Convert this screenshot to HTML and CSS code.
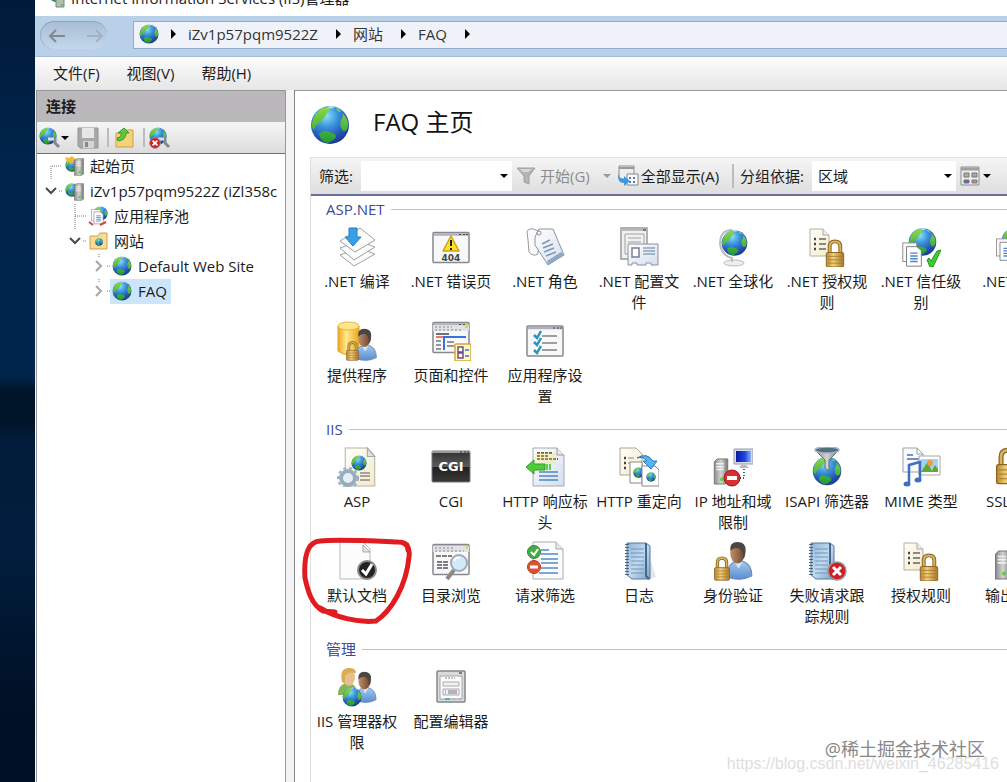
FILE: index.html
```html
<!doctype html>
<html lang="zh-CN">
<head>
    <meta charset="utf-8">
    <title>Internet Information Services (IIS)管理器</title>
    <link rel="stylesheet" href="styles.css">
</head>
<body>
    <svg class="defs" aria-hidden="true">
        <defs>
            <radialGradient id="g-sea" cx="0.4" cy="0.25" r="0.75">
                <stop offset="0" stop-color="#8fe0f8"/><stop offset="0.4" stop-color="#3a94dc"/>
                <stop offset="0.8" stop-color="#2350b4"/><stop offset="1" stop-color="#1c3c90"/>
            </radialGradient>
            <linearGradient id="g-land" x2="0" y2="1"><stop offset="0" stop-color="#8ad84a"/><stop offset="1" stop-color="#209a30"/></linearGradient>
            <linearGradient id="g-gold" x2="1" y2="0"><stop offset="0" stop-color="#b98630"/><stop offset="0.4" stop-color="#f0d078"/><stop offset="1" stop-color="#a8762a"/></linearGradient>
            <linearGradient id="g-yellow" x2="1" y2="0"><stop offset="0" stop-color="#f0a818"/><stop offset="0.4" stop-color="#ffe890"/><stop offset="1" stop-color="#eca818"/></linearGradient>
            <linearGradient id="g-paper" x2="1" y2="1"><stop offset="0" stop-color="#ffffff"/><stop offset="1" stop-color="#d4deec"/></linearGradient>
            <linearGradient id="g-cream" x2="1" y2="1"><stop offset="0" stop-color="#fffefa"/><stop offset="1" stop-color="#f4ebc8"/></linearGradient>
            <linearGradient id="g-metal" x2="1" y2="0"><stop offset="0" stop-color="#8b8b8b"/><stop offset="0.5" stop-color="#d4d4d4"/><stop offset="1" stop-color="#777777"/></linearGradient>
            <linearGradient id="g-shirt" x2="0" y2="1"><stop offset="0" stop-color="#a8ccf0"/><stop offset="1" stop-color="#5a8ccc"/></linearGradient>
            <linearGradient id="g-skin" x2="1" y2="0"><stop offset="0" stop-color="#c09068"/><stop offset="1" stop-color="#6c4430"/></linearGradient>
            <linearGradient id="g-book" x2="1" y2="1"><stop offset="0" stop-color="#8fb4d8"/><stop offset="0.5" stop-color="#c2dbf0"/><stop offset="1" stop-color="#7ea4c8"/></linearGradient>
            <linearGradient id="g-black" x2="0" y2="1"><stop offset="0" stop-color="#303030"/><stop offset="0.5" stop-color="#5a5a5a"/><stop offset="0.52" stop-color="#202020"/><stop offset="1" stop-color="#383838"/></linearGradient>
            <linearGradient id="g-screen" x2="1" y2="0"><stop offset="0" stop-color="#0818a8"/><stop offset="0.6" stop-color="#2048e0"/><stop offset="1" stop-color="#90b0f8"/></linearGradient>
        </defs>

        <symbol id="globe" viewBox="0 0 40 40">
            <circle cx="20" cy="20" r="19" fill="url(#g-sea)"/>
            <path fill="url(#g-land)" d="M2 18Q4 7 13 3Q20 1 20 6Q16 8 15 12Q12 14 10 18Q6 19 4 25Q1 22 2 18ZM32 8Q39 14 38 21Q37 27 33 26Q29 21 31 15Q34 12 32 8ZM9 29Q13 24 19 27Q26 28 26 32Q22 37 17 38Q10 36 9 29ZM26 3Q30 4 31 7Q27 7 26 3Z"/>
            <path fill="#ffffff" opacity="0.6" d="M17 2Q21 0 25 2Q21 5 17 2Z"/>
        </symbol>
        <symbol id="lock" viewBox="0 0 20 30">
            <path d="M4.500 16V8Q4.500 2.500 10 2.500T15.500 8V16" fill="none" stroke="#8c6422" stroke-width="4"/>
            <path d="M4.500 16V8Q4.500 2.500 10 2.500T15.500 8V16" fill="none" stroke="#d8b45c" stroke-width="2"/>
            <rect x="1" y="14" width="18" height="15" rx="1.500" fill="url(#g-gold)" stroke="#8c6422"/>
            <path d="M3 18H17M3 21.500H17M3 25H17" stroke="#9c6e24" opacity="0.7"/>
        </symbol>
        <symbol id="person" viewBox="0 0 26 38">
            <path d="M1 35Q1 20 13 19Q25 21 25 34Q14 40 1 35Z" fill="url(#g-shirt)" stroke="#5f88bb"/>
            <path d="M8 20L12 27L16 20Z" fill="#d8e8f8"/>
            <ellipse cx="11" cy="12" rx="7" ry="10" fill="url(#g-skin)"/>
            <path d="M4 10Q3 1 11 1Q19 1 19 9Q19 14 17 18Q16 8 12 7Q7 6 4 10Z" fill="#4a4644"/>
        </symbol>
        <symbol id="page" viewBox="0 0 30 38">
            <path d="M1 1H22L29 9V37H1Z" fill="url(#g-cream)" stroke="#b4b4ac"/>
            <path d="M22 1V9H29Z" fill="#e0e0e0" stroke="#a8a8a8"/>
        </symbol>
        <symbol id="server" viewBox="0 0 16 28">
            <path d="M1 4L4 1H15V25L12 27H1Z" fill="url(#g-metal)" stroke="#787878"/>
            <path d="M3 6H11M3 9H11M3 12H11" stroke="#f0f0f0" stroke-width="1.500"/>
            <circle cx="9" cy="22" r="2" fill="#58d838"/>
        </symbol>
        <symbol id="frame" viewBox="0 0 38 32">
            <rect x="1" y="1" width="36" height="30" rx="1" fill="#f8f8f9" stroke="#85888e" stroke-width="1.500"/>
            <path d="M2 3H36" stroke="#adb2ba" stroke-width="2.500"/>
            <path d="M27 3H29M31 3H33M34 3H36" stroke="#46484c"/>
        </symbol>
        <symbol id="rules" viewBox="0 0 40 40">
            <path d="M3 2H16L22 8V29H3Z" fill="url(#g-cream)" stroke="#b4b09c"/>
            <path d="M16 2V8H22" fill="#eeeeee" stroke="#aaaaaa"/>
            <path d="M7 12H9M7 17H9M7 22H9" stroke="#444444" stroke-width="2.500"/>
            <path d="M12 12H19M12 17H19M12 22H19" stroke="#666666" stroke-width="1.500"/>
            <use href="#lock" x="18" y="12" width="20" height="29"/>
        </symbol>
        <symbol id="notebook" viewBox="0 0 40 40">
            <path d="M32 20L37 36L31 38H12Z" fill="#e6e6e6"/>
            <path d="M8 2H27L31 5V38H13L8 34Z" fill="url(#g-book)" stroke="#54799c"/>
            <path d="M27 2V35L30 38" fill="none" stroke="#44688c" stroke-width="2"/>
            <path d="M12 8H25M12 12H25M12 16H25M12 20H25M12 24H25M12 28H25M12 32H25" stroke="#6f96ba"/>
            <path d="M8 3V35" stroke="#4c6680" stroke-width="4" stroke-dasharray="1 2"/>
        </symbol>
        <symbol id="pages" viewBox="0 0 24 28">
            <rect x="1" y="1" width="15" height="20" fill="#fafafa" stroke="#8c8c8c"/>
            <path d="M5 5H16L21 9V26H5Z" fill="#ffffff" stroke="#777777"/>
            <path d="M9 12H17M9 15H17M9 18H17M9 21H17" stroke="#4b82cc" stroke-width="1.500"/>
        </symbol>
        <symbol id="plug" viewBox="0 0 22 22">
            <use href="#globe" x="0" y="0" width="18" height="18"/>
            <path d="M9 12H16V16L20 20" fill="none" stroke="#828a90" stroke-width="3"/>
            <path d="M9 12H15" stroke="#dddddd" stroke-width="3"/>
        </symbol>
        <symbol id="cross" viewBox="0 0 20 20">
            <circle cx="10" cy="10" r="9" fill="#cc2028" stroke="#98989c" stroke-width="1.500"/>
            <path d="M6 6L14 14M14 6L6 14" stroke="#ffffff" stroke-width="3"/>
        </symbol>
    </svg>

    <div class="desktop"></div>
    <div class="window">
        <header class="titlebar">
            <svg class="titlebar-icon" viewBox="0 0 16 16"><use href="#globe" width="10" height="10"/><path d="M6 2H14V15H6Z" fill="#b4bcb4" stroke="#788878"/><circle cx="12" cy="13" r="1" fill="#30c030"/></svg>
            <span>Internet Information Services (IIS)管理器</span>
        </header>

        <nav class="address">
            <div class="history">
                <button type="button" aria-label="后退"><svg viewBox="0 0 18 16"><path d="M17 8H2M8 2L2 8L8 14" fill="none" stroke="#85898f" stroke-width="2"/></svg></button>
                <button type="button" aria-label="前进"><svg viewBox="0 0 18 16"><path d="M1 8H16M10 2L16 8L10 14" fill="none" stroke="#a4b1c2" stroke-width="2"/></svg></button>
            </div>
            <div class="crumbs">
                <svg class="crumb-globe"><use href="#globe"/></svg>
                <i class="arrow-right"></i><a href="#server">iZv1p57pqm9522Z</a>
                <i class="arrow-right"></i><a href="#sites">网站</a>
                <i class="arrow-right"></i><a href="#faq">FAQ</a>
                <i class="arrow-right"></i>
            </div>
        </nav>

        <div class="menubar">
            <button type="button">文件(F)</button>
            <button type="button">视图(V)</button>
            <button type="button">帮助(H)</button>
        </div>

        <div class="panes">
            <aside class="connections">
                <h2>连接</h2>
                <div class="conn-tools">
                    <button type="button" aria-label="创建新连接"><svg class="tool"><use href="#plug"/></svg><i class="arrow-down"></i></button>
                    <button type="button" aria-label="保存连接"><svg class="tool" viewBox="0 0 22 22"><path d="M1 1H21V21H3L1 19Z" fill="#a8a8a8" stroke="#929292"/><path d="M5 1H17V11H5Z" fill="#e6e6e6"/><path d="M6 14H17V21H6Z" fill="#d4d4d4"/><path d="M8 15H11V20H8Z" fill="#888888"/></svg></button>
                    <i class="sep"></i>
                    <button type="button" aria-label="向上"><svg class="tool" viewBox="0 0 22 22"><path d="M3 6H11L13 3H20V20H3Z" fill="#f5d27a" stroke="#cf9f42"/><path d="M4 11Q9 10 8 6H5L11 1L16 6H13Q13 13 5 14Z" fill="#5cc83c" stroke="#38982a"/></svg></button>
                    <i class="sep"></i>
                    <button type="button" aria-label="删除连接"><svg class="tool" viewBox="0 0 22 22"><use href="#plug" width="22" height="22"/><use href="#cross" x="0" y="10" width="12" height="12"/></svg></button>
                </div>
                <ul class="tree">
                    <li class="level-1">
                        <svg class="twist" viewBox="0 0 20 25"><path class="dots" d="M9 25V12H20"/></svg>
                        <a href="#start"><svg viewBox="0 0 20 20"><use href="#globe" x="1" y="2" width="14" height="14"/><path d="M1 1L5 2L8 0L11 3L9 7L3 6Z" fill="#f4b82c"/><use href="#server" x="9" y="2" width="12" height="18"/></svg>起始页</a>
                    </li>
                    <li class="level-1">
                        <svg class="twist" viewBox="0 0 20 25"><path class="open" d="M4 9L9 14L14 9"/><path class="dots" d="M17 12H20"/></svg>
                        <a href="#server"><svg viewBox="0 0 20 20"><use href="#globe" x="1" y="2" width="14" height="14"/><use href="#server" x="9" y="2" width="12" height="18"/></svg>iZv1p57pqm9522Z (iZl358c</a>
                    </li>
                    <li class="level-2">
                        <svg class="twist" viewBox="0 0 20 25"><path class="dots" d="M9 0V25M9 12H20"/></svg>
                        <a href="#pools"><svg viewBox="0 0 20 20"><use href="#globe" x="5" y="0" width="15" height="15"/><use href="#pages" x="2" y="3" width="16" height="16"/><path d="M1 16L5 19M12 19L18 16" stroke="#d04840" stroke-width="2"/></svg>应用程序池</a>
                    </li>
                    <li class="level-2">
                        <svg class="twist" viewBox="0 0 20 25"><path class="open" d="M4 9L9 14L14 9"/><path class="dots" d="M17 12H20"/></svg>
                        <a href="#sites"><svg viewBox="0 0 20 20"><path d="M2 5H10L12 2H19V18H2Z" fill="#f8dc90" stroke="#d0a048"/><use href="#globe" x="7" y="7" width="8" height="8"/></svg>网站</a>
                    </li>
                    <li class="level-3">
                        <svg class="twist" viewBox="0 0 20 25"><path class="closed" d="M6 7L11 12L6 17"/><path class="dots" d="M9 0V3M17 12H20"/></svg>
                        <a href="#default"><svg><use href="#globe"/></svg>Default Web Site</a>
                    </li>
                    <li class="level-3">
                        <svg class="twist" viewBox="0 0 20 25"><path class="closed" d="M6 7L11 12L6 17"/><path class="dots" d="M9 0V3M17 12H20"/></svg>
                        <a href="#faq" class="selected"><svg><use href="#globe"/></svg>FAQ</a>
                    </li>
                </ul>
            </aside>

            <main class="home">
                <div class="heading">
                    <svg><use href="#globe"/></svg>
                    <h1>FAQ 主页</h1>
                </div>
                <div class="features">
                    <div class="filterbar">
                        <label for="filter">筛选:</label>
                        <select id="filter" class="filter"><option></option></select>
                        <button type="button" class="start" disabled><svg class="tool" viewBox="0 0 22 22"><path d="M2 3H20L14 11V19L9 17V11Z" fill="#b4b4b4" stroke="#a0a0a0"/><path d="M5 4H17L13 7H8Z" fill="#d8d8d8"/></svg>开始(G)<i class="arrow-down"></i></button>
                        <button type="button" class="show-all"><svg class="tool" viewBox="0 0 22 22"><path d="M2 1H17V14H2Z" fill="#eeeeee" stroke="#909090"/><path d="M2 3H17" stroke="#9a9a9a" stroke-width="2"/><path d="M10 9H21V20H10Z" fill="#f8f8f8" stroke="#888888"/><path d="M12 13H14M16 13H18M12 17H14M16 17H18" stroke="#5878c8" stroke-width="2"/><path d="M1 8Q2 14 7 14V11L13 16L7 21V18Q0 18 1 8Z" fill="#3c98dc"/></svg>全部显示(A)</button>
                        <i class="sep"></i>
                        <label for="group">分组依据:</label>
                        <select id="group" class="group-by"><option>区域</option></select>
                        <button type="button" class="view" aria-label="视图"><svg class="tool" viewBox="0 0 22 22"><path d="M2 2H20V20H2Z" fill="#eeeeee" stroke="#8c8c8c"/><path d="M2 4H20" stroke="#a0a0a0" stroke-width="3"/><path d="M5 8H10V12H5Z" fill="#b8b090" stroke="#777777"/><path d="M13 8H18V12H13Z" fill="#90b0c0" stroke="#777777"/><path d="M5 15H10V18H5Z" fill="#6060c0" stroke="#777777"/><path d="M13 15H18V18H13Z" fill="#d08888" stroke="#777777"/></svg><i class="arrow-down"></i></button>
                    </div>

                    <section>
                        <h3>ASP.NET</h3>
                        <div class="items">
                            <a class="item" href="#compile"><svg viewBox="0 0 40 40"><g fill="#fcfcfc" stroke="#a0a0a0"><path d="M3 28L22 21L38 27L17 39Z"/><path d="M3 21L22 14L38 20L17 33Z"/><path d="M3 14L23 1L38 13L18 25Z"/></g><path d="M12 1H20V10H24L16 19L8 10H12Z" fill="#38a0e8" stroke="#247cc0"/></svg>.NET 编译</a>
                            <a class="item" href="#error"><svg viewBox="0 0 40 40"><use href="#frame" x="1" y="4" width="38" height="33"/><path d="M20 9L28 24H12Z" fill="#ffe030" stroke="#d0a010" stroke-width="1.500" stroke-linejoin="round"/><path d="M20 13V19M20 21V23" stroke="#222222" stroke-width="2"/><text x="20" y="34" class="svg-404">404</text></svg>.NET 错误页</a>
                            <a class="item" href="#roles"><svg viewBox="0 0 40 40"><path d="M2 5Q3 1 8 2L14 4L13 27Q8 30 4 25L3 13Z" fill="#fbfbfb" stroke="#999999"/><path d="M10 10L14 2H28L39 28L23 38L10 18Z" fill="url(#g-paper)" stroke="#8595a8"/><path d="M39 28L23 38L22 34L36 25Z" fill="#8fa9c4"/><circle cx="14" cy="6" r="2" fill="#ffffff" stroke="#888888"/><path d="M17 17L25 13M18 21L28 17M19 25L29 21M21 29L31 25" stroke="#7d98b8" stroke-width="1.500"/></svg>.NET 角色</a>
                            <a class="item" href="#config"><svg viewBox="0 0 40 40"><path d="M2 1H28V32H2Z" fill="#f1f1f1" stroke="#999999" stroke-width="1.500"/><path d="M2 3H28" stroke="#bbbbbb" stroke-width="2"/><path d="M24 3H27" stroke="#333333"/><path d="M6 9V7H25V27H6V9M9 11H22M9 15H22M9 19H15" fill="none" stroke="#a0a0a0"/><path d="M9 17H39V38H32V36H27V38H18V36H13V38H9Z" fill="url(#g-paper)" stroke="#8a929e"/><path d="M13 21H20V30H13Z" fill="#ffffff" stroke="#778092" stroke-width="1.500"/><path d="M24 21H36M24 24H36M24 27H36" stroke="#8ba3be" stroke-width="1.500"/></svg>.NET 配置文<br>件</a>
                            <a class="item" href="#global"><svg viewBox="0 0 40 40"><ellipse cx="21" cy="36" rx="10" ry="3" fill="#eeeeee" stroke="#bbbbbb"/><path d="M19 3Q7 3 7 17Q9 29 19 31V35" fill="none" stroke="#bcbcbc" stroke-width="2"/><use href="#globe" x="8" y="2" width="27" height="28"/></svg>.NET 全球化</a>
                            <a class="item" href="#auth"><svg><use href="#rules"/></svg>.NET 授权规<br>则</a>
                            <a class="item" href="#trust"><svg viewBox="0 0 40 40"><use href="#globe" x="7" y="0" width="29" height="30"/><use href="#pages" x="0" y="15" width="24" height="26"/><path d="M26 33L29 40H32L40 23L36 24L30 34L28 31Z" fill="#40c832" stroke="#279a20"/></svg>.NET 信任级<br>别</a>
                            <a class="item" href="#users"><svg viewBox="0 0 40 40"><use href="#globe" x="6" y="0" width="28" height="28"/><use href="#pages" x="0" y="11" width="22" height="24"/></svg>.NET 用户</a>
                            <a class="item" href="#providers"><svg viewBox="0 0 40 40"><path d="M1 5V30Q10 37 22 31V5Z" fill="url(#g-yellow)" stroke="#e0a028"/><ellipse cx="11.500" cy="5" rx="10.500" ry="4" fill="#ffe68a" stroke="#eab43c"/><use href="#person" x="17" y="7" width="24" height="33"/><use href="#lock" x="8" y="20" width="15" height="20"/></svg>提供程序</a>
                            <a class="item" href="#controls"><svg viewBox="0 0 40 40"><use href="#frame" x="1" y="0" width="38" height="33"/><path d="M2 4H38V10H2Z" fill="#e0e2e5"/><path d="M4 6H21M4 9H32" stroke="#888888" stroke-dasharray="2 2"/><path d="M34 3H37V7H34Z" fill="#d8d840"/><path d="M5 13H18" stroke="#444444" stroke-width="1.500"/><path d="M5 16H12" stroke="#e05040" stroke-width="1.500"/><path d="M12 16H35M13 16V29" fill="none" stroke="#3a70e0" stroke-width="2"/><path d="M5 20H10M5 24H10M5 28H10M16 21H23M16 25H23" stroke="#777777" stroke-width="1.500"/><rect x="24" y="23" width="16" height="17" rx="1" fill="#fff8d8" stroke="#d8a828" stroke-width="1.500"/><path d="M27 26H32V31H27ZM27 32H32V37H27Z" fill="#ffffff" stroke="#6e5078" stroke-width="1.500"/><path d="M34 29H38M34 35H38" stroke="#3a70c0" stroke-width="1.500"/></svg>页面和控件</a>
                            <a class="item" href="#appset"><svg viewBox="0 0 40 40"><use href="#frame" x="1" y="3" width="38" height="34"/><path d="M17 15H32M17 22H32M17 29H32" stroke="#808080" stroke-width="1.500"/><path d="M9 14L12 17L16 10M9 21L12 24L16 17M9 29L12 32L16 25" fill="none" stroke="#2a94bc" stroke-width="2.500"/></svg>应用程序设<br>置</a>
                        </div>
                    </section>

                    <section>
                        <h3>IIS</h3>
                        <div class="items">
                            <a class="item" href="#asp"><svg viewBox="0 0 40 40"><use href="#page" x="7" y="0" width="32" height="40"/><use href="#globe" x="14" y="8" width="16" height="16"/><path d="M23 26H33M23 29H33M23 33H33" stroke="#888888" stroke-width="1.500"/><circle cx="11" cy="31" r="7" fill="#e8eff4" stroke="#94adbf" stroke-width="4"/><circle cx="11" cy="31" r="10" fill="none" stroke="#94adbf" stroke-width="2" stroke-dasharray="3 3"/></svg>ASP</a>
                            <a class="item" href="#cgi"><svg viewBox="0 0 40 40"><rect x="1" y="4" width="38" height="31" rx="1" fill="url(#g-black)" stroke="#777777"/><path d="M1 5H39" stroke="#999999" stroke-width="2"/><path d="M29 5H31M33 5H35M36 5H38" stroke="#333333"/><text x="20" y="24" class="svg-cgi">CGI</text></svg>CGI</a>
                            <a class="item" href="#headers"><svg viewBox="0 0 40 40"><path d="M8 1H32L39 8V39H8Z" fill="url(#g-paper)" stroke="#a2a8b0"/><path d="M32 1V8H39" fill="#e8e8e8" stroke="#999999"/><path d="M12 6H27M12 9H24M12 12H33" stroke="#746820" stroke-width="2" stroke-dasharray="3 1"/><path d="M10 6H31V17H10Z" fill="#f0e470" opacity="0.3"/><path d="M1 20L9 13V17H20V23H9V27Z" fill="#50cc38" stroke="#2f9e24"/><path d="M22 17V23M25 17V23" stroke="#60cc48" stroke-width="2"/><path d="M14 25H33M14 29H33M14 33H33" stroke="#4c86c8" stroke-width="1.500"/></svg>HTTP 响应标<br>头</a>
                            <a class="item" href="#redirect"><svg viewBox="0 0 40 40"><path d="M1 1H17L23 7V28H1Z" fill="url(#g-cream)" stroke="#aaa694"/><path d="M5 11H7M5 16H7M5 21H7" stroke="#444444" stroke-width="2.500"/><path d="M9 11H15M9 16H15" stroke="#888888"/><path d="M11 15H23V36H11Z" fill="#ffffff" stroke="#888888"/><use href="#globe" x="14" y="20" width="11" height="11"/><path d="M23 19H36L40 23V39H23Z" fill="#ffffff" stroke="#888888"/><use href="#globe" x="27" y="25" width="10" height="10"/><path d="M18 11Q28 5 34 14H38L32 22L24 14H28Q24 9 18 11Z" fill="#58b4ec" stroke="#2878b8"/></svg>HTTP 重定向</a>
                            <a class="item" href="#ip"><svg viewBox="0 0 40 40"><use href="#server" x="-3" y="11" width="22" height="27"/><path d="M21 2H40V17H21Z" fill="#d8dce4" stroke="#969ca8"/><path d="M23 4H38V15H23Z" fill="url(#g-screen)"/><path d="M28 18H33L36 21H26Z" fill="#bbbbbb"/><path d="M31 22V31H25" fill="none" stroke="#222222" stroke-width="1.500" stroke-dasharray="1 2"/><circle cx="19" cy="31" r="8" fill="#d83030" stroke="#a01818"/><path d="M14 31H24" stroke="#ffffff" stroke-width="4"/></svg>IP 地址和域<br>限制</a>
                            <a class="item" href="#isapi"><svg viewBox="0 0 40 40"><use href="#globe" x="5" y="9" width="30" height="30"/><path d="M8 3L18 13V21L22 24V13L32 3Z" fill="url(#g-metal)" stroke="#60707c"/><ellipse cx="20" cy="3" rx="12" ry="3" fill="#526e80" stroke="#a2b6c4" stroke-width="1.500"/></svg>ISAPI 筛选器</a>
                            <a class="item" href="#mime"><svg viewBox="0 0 40 40"><path d="M2 1H16L22 7V25H2Z" fill="#f9fafc" stroke="#9aa0ac"/><path d="M16 1V7H22" fill="none" stroke="#9aa0ac"/><path d="M6 8H12M6 12H18" stroke="#4070b8" stroke-width="1.500"/><path d="M18 9H39V28H18Z" fill="#ffffff" stroke="#a8a8a8"/><path d="M20 12H37V25H20Z" fill="#9fd4f8"/><path d="M20 25L27 14L31 25ZM30 25L34 18L37 22V25Z" fill="#60a830"/><circle cx="29" cy="16" r="3" fill="#f89838"/><path d="M8 36V18L19 15V32" fill="none" stroke="#3e6fc0" stroke-width="2.500"/><ellipse cx="6" cy="37" rx="3.500" ry="2.500" fill="#3e6fc0"/><ellipse cx="17" cy="33" rx="3.500" ry="2.500" fill="#3e6fc0"/></svg>MIME 类型</a>
                            <a class="item" href="#ssl"><svg viewBox="0 0 40 40"><use href="#lock" x="-2" y="0" width="30" height="38"/></svg>SSL 设置</a>
                            <a class="item" href="#document"><svg viewBox="0 0 40 40"><path d="M3 1H26L33 8V38H3Z" fill="#fcfcfc" stroke="#b8b8b8"/><path d="M26 4V11H33Z" fill="#e5e5e5" stroke="#aaaaaa"/><circle cx="30" cy="29" r="9" fill="#222222" stroke="#888888" stroke-width="2"/><path d="M25 29L29 33L35 23" fill="none" stroke="#ffffff" stroke-width="3"/></svg>默认文档<svg class="red-mark" viewBox="0 0 112 90" aria-hidden="true"><path d="M108 15Q108 7 98 7C75 6 36 4 20 6C5 7 4 27 5 43C8 57 12 70 23 76L35 77M20 73C35 82 58 88 76 86C91 76 106 52 109 22Q110 15 107 10"/></svg></a>
                            <a class="item" href="#browse"><svg viewBox="0 0 40 40"><use href="#frame" x="1" y="1" width="38" height="35"/><path d="M2 5H38V11H2Z" fill="#e0e2e5"/><path d="M4 7H22M4 10H33" stroke="#888888" stroke-dasharray="2 2"/><path d="M35 4H37V8H35Z" fill="#d8d840"/><path d="M5 15H21M6 21H18M6 24H18M6 27H18" stroke="#555555" stroke-width="1.500" stroke-dasharray="5 1"/><path d="M23 29L16 38" stroke="#888888" stroke-width="4"/><circle cx="28" cy="22" r="8" fill="#d4e8fa" stroke="#a1a9b2" stroke-width="2"/><path d="M23 20Q24 16 29 17" fill="none" stroke="#ffffff" stroke-width="2"/></svg>目录浏览</a>
                            <a class="item" href="#request"><svg viewBox="0 0 40 40"><path d="M8 1H31L38 8V38H8Z" fill="#fbfcff" stroke="#aaaaaa"/><path d="M31 1V8H38" fill="#e8e8e8" stroke="#aaaaaa"/><path d="M16 9H24M16 13H33M16 18H33M16 22H33M16 27H33M14 32H33" stroke="#518bc4" stroke-width="1.500"/><circle cx="9" cy="11" r="6.500" fill="#46ac48" stroke="#338836"/><path d="M6 11L9 14L13 8" fill="none" stroke="#ffffff" stroke-width="2"/><circle cx="9" cy="26" r="6.500" fill="#e05030" stroke="#b83a20"/><path d="M5 26H13" stroke="#ffffff" stroke-width="3"/></svg>请求筛选</a>
                            <a class="item" href="#log"><svg><use href="#notebook"/></svg>日志</a>
                            <a class="item" href="#identity"><svg viewBox="0 0 40 40"><use href="#person" x="13" y="0" width="27" height="39"/><use href="#lock" x="0" y="15" width="18" height="25"/></svg>身份验证</a>
                            <a class="item" href="#failed"><svg viewBox="0 0 40 40"><use href="#notebook" x="-4" y="0" width="40" height="40"/><use href="#cross" x="20" y="20" width="20" height="20"/></svg>失败请求跟<br>踪规则</a>
                            <a class="item" href="#authz"><svg><use href="#rules"/></svg>授权规则</a>
                            <a class="item" href="#output"><svg viewBox="0 0 40 40"><use href="#server" x="-2" y="9" width="20" height="30"/><use href="#server" x="12" y="1" width="20" height="30"/></svg>输出缓存</a>
                        </div>
                    </section>

                    <section>
                        <h3>管理</h3>
                        <div class="items">
                            <a class="item" href="#permissions"><svg viewBox="0 0 40 40"><path d="M1 28Q1 16 12 16Q21 18 20 28Z" fill="#86b45c"/><ellipse cx="12" cy="10" rx="6" ry="9" fill="#e8c090"/><path d="M5 15Q2 1 12 1Q19 1 19 6Q11 4 8 9V17Z" fill="#d8ae50"/><use href="#person" x="18" y="4" width="22" height="32"/><use href="#globe" x="5" y="20" width="20" height="20"/></svg>IIS 管理器权<br>限</a>
                            <a class="item" href="#editor"><svg viewBox="0 0 40 40"><rect x="6" y="4" width="28" height="31" rx="1" fill="#d8dbde" stroke="#868686" stroke-width="1.500"/><path d="M9 9H31V32H9Z" fill="#fcfcfc" stroke="#a4a4a4"/><path d="M28 6H31" stroke="#222222"/><path d="M14 11H24" stroke="#888888" stroke-dasharray="2 1"/><path d="M12 15H28V19H12ZM12 22H28V28H12Z" fill="#f1f1f1" stroke="#aaaaaa"/><path d="M14 24H15M14 26H15M17 24H26M17 26H26" stroke="#777777"/><path d="M14 32H19" stroke="#3bb4e0" stroke-width="2"/><path d="M21 32H25M27 32H30" stroke="#bbbbbb" stroke-width="2"/></svg>配置编辑器</a>
                        </div>
                    </section>
                </div>
            </main>
        </div>
    </div>
    <div class="mark mark-url">https://blog.csdn.net/weixin_46285416</div>
    <div class="mark mark-site">@稀土掘金技术社区</div>
</body>
</html>
```

FILE: styles.css
```css
* { margin: 0; padding: 0; box-sizing: border-box; }
body {
    font: 15px/20px "Open Sans", "Noto Sans CJK SC", sans-serif;
    color: #1c1c1c;
    background-color: #fff;
    display: flex;
    height: 100vh;
    overflow: hidden;
    position: relative;
}
button, select { font: inherit; color: inherit; border: 0; background: none; }
button { display: flex; align-items: center; white-space: nowrap; }
select { appearance: none; border-radius: 0; }
a { color: inherit; text-decoration: none; }
svg { flex: none; }

.defs { position: absolute; width: 0; height: 0; }

.desktop {
    flex: 0 0 35px;
    background: linear-gradient(#001a3a, #00244a 20%, #00264c 48%, #00142a 50%, #001428 54%, #001c3a 56%, #001e3e 70%, #001228 88%, #001024);
}

.window {
    flex: 1;
    min-width: 0;
    display: flex;
    flex-direction: column;
    background-color: #f3f3f3;
}

.titlebar {
    height: 16px;
    padding: 0 0 8px 15px;
    display: flex;
    align-items: flex-end;
    gap: 5px;
    background-color: #fff;
    white-space: nowrap;
}
.titlebar-icon { width: 16px; height: 16px; }

/* address bar */
.address {
    height: 41px;
    padding: 5px 0 7px 5px;
    display: flex;
    gap: 26px;
    background-color: #b9d0e9;
    border-bottom: 1px solid #a9bdd6;
}
.history {
    width: 67px;
    padding: 0 3px 0 7px;
    display: flex;
    justify-content: space-between;
    align-items: center;
    background: linear-gradient(#a9bed6, #c3d6eb);
    border-top: 1px solid #8fa4bd;
    border-left: 1px solid #97abc4;
    border-radius: 15px;
}
.history svg { width: 18px; height: 16px; }
.crumbs {
    flex: 1;
    display: flex;
    align-items: center;
    background-color: #eff3f9;
    border: 1px solid #93abca;
    border-right: 0;
    padding: 0 0 2px 5px;
}
.crumb-globe { width: 20px; height: 20px; margin-right: 12px; }
.crumbs a { padding: 0 18px 0 12px; white-space: nowrap; color: #333; }
.arrow-right {
    border-left: 5px solid #000;
    border-top: 5px solid transparent;
    border-bottom: 5px solid transparent;
}
.arrow-down {
    border-top: 4px solid #000;
    border-left: 4px solid transparent;
    border-right: 4px solid transparent;
}

.menubar {
    height: 33px;
    padding: 0 0 2px 18px;
    display: flex;
    gap: 27px;
    background: linear-gradient(#fcfcfc, #e6e6e6);
}

.panes { flex: 1; min-height: 0; display: flex; gap: 8px; padding-left: 1px; }

/* connections */
.connections {
    flex: 0 0 250px;
    min-width: 0;
    background-color: #fff;
    border: 1px solid #98989c;
    border-bottom: 0;
    overflow: hidden;
}
.connections h2 {
    height: 31px;
    padding-left: 9px;
    font-size: 15px;
    line-height: 31px;
    background-color: #bab8bb;
}
.conn-tools {
    height: 32px;
    padding: 0 2px;
    display: flex;
    align-items: center;
    gap: 8px;
    background: linear-gradient(#f6f6f6, #dcdcdc);
    border-bottom: 1px solid #6e6a94;
}
.conn-tools .sep + button { margin-left: -4px; }
.tool { width: 22px; height: 22px; }
.sep { width: 2px; height: 19px; background-color: #bcbcbc; }

.tree { list-style: none; padding-left: 5px; }
.tree li { height: 25px; display: flex; }
.tree .level-2 { padding-left: 24px; }
.tree .level-3 { padding-left: 48px; }
.twist { width: 20px; height: 25px; fill: none; }
.twist .dots { stroke: #777; stroke-dasharray: 1 1; }
.twist .open { stroke: #4a4a4a; stroke-width: 2; }
.twist .closed { stroke: #a6a6a6; stroke-width: 2; }
.tree a {
    padding: 0 4px 2px 2px;
    display: flex;
    align-items: center;
    gap: 6px;
    white-space: nowrap;
}
.tree a svg { width: 20px; height: 20px; }
.tree .selected { background-color: #cce5fb; }

/* feature home */
.home {
    flex: 1;
    min-width: 0;
    background-color: #fff;
    border-top: 1px solid #98989c;
    border-left: 1px solid #85858a;
    padding-left: 15px;
    display: flex;
    flex-direction: column;
    overflow: hidden;
}
.heading { flex: none; height: 66px; padding-top: 12px; display: flex; gap: 23px; }
.heading svg { width: 40px; height: 44px; }
.heading h1 { font-size: 24px; font-weight: 400; line-height: 38px; color: #111; }
.features { flex: 1; border-left: 1px solid #ddd; }
.filterbar {
    height: 39px;
    padding-left: 8px;
    display: flex;
    align-items: center;
    background: linear-gradient(#f5f5f5, #dedede);
    border-top: 1px solid #e4e4e4;
    border-bottom: 2px solid #6c6c9c;
    white-space: nowrap;
}
.filter, .group-by {
    height: 30px;
    margin-left: 8px;
    padding: 0 6px;
    background: #fff url("data:image/svg+xml,%3Csvg xmlns='http://www.w3.org/2000/svg' viewBox='0 0 8 4'%3E%3Cpath d='M0 0h8L4 4z'/%3E%3C/svg%3E") no-repeat right 4px center / 8px 4px;
}
.filter { width: 151px; }
.group-by { width: 144px; }
.start { margin-left: 3px; gap: 3px; color: #8c8c8c; }
.start .arrow-down { margin-left: 10px; border-top-color: #999; }
.show-all { margin: 0 13px 0 6px; gap: 2px; }
.filterbar .sep { height: 24px; margin-right: 6px; }
.view { margin-left: 3px; gap: 2px; }

section { min-height: 220px; padding-top: 3px; }
section h3 {
    padding-left: 15px;
    display: flex;
    align-items: center;
    gap: 6px;
    font-size: 15px;
    font-weight: 400;
    line-height: 20px;
    color: #3c4a9c;
}
section h3::after { content: ""; flex: 1; height: 1px; background-color: #bcc0e4; }
.items {
    margin-left: -1px;
    display: grid;
    grid-template-columns: repeat(8, 94px);
    grid-auto-rows: 94px;
}
.item {
    padding-top: 8px;
    text-align: center;
    line-height: 21px;
    white-space: nowrap;
    position: relative;
}
.item > svg:first-child { display: block; width: 40px; height: 40px; margin: 0 auto 4px; }
.svg-404 { font: bold 9px "DejaVu Sans", sans-serif; text-anchor: middle; fill: #444; }
.svg-cgi { font: bold 13px "DejaVu Sans", sans-serif; text-anchor: middle; fill: #fff; }

/* hand-drawn ring round the item */
.red-mark {
    position: absolute;
    left: -10px;
    top: 2px;
    width: 112px;
    height: 90px;
    fill: none;
    stroke: #e01c20;
    stroke-width: 5;
    stroke-linecap: round;
}

.mark { position: absolute; white-space: nowrap; }
.mark-site { right: 22px; bottom: 23px; font-size: 18px; color: #888; }
.mark-url { right: 8px; bottom: 8px; font: 16px/20px "Liberation Sans", sans-serif; color: #dedede; }
```
